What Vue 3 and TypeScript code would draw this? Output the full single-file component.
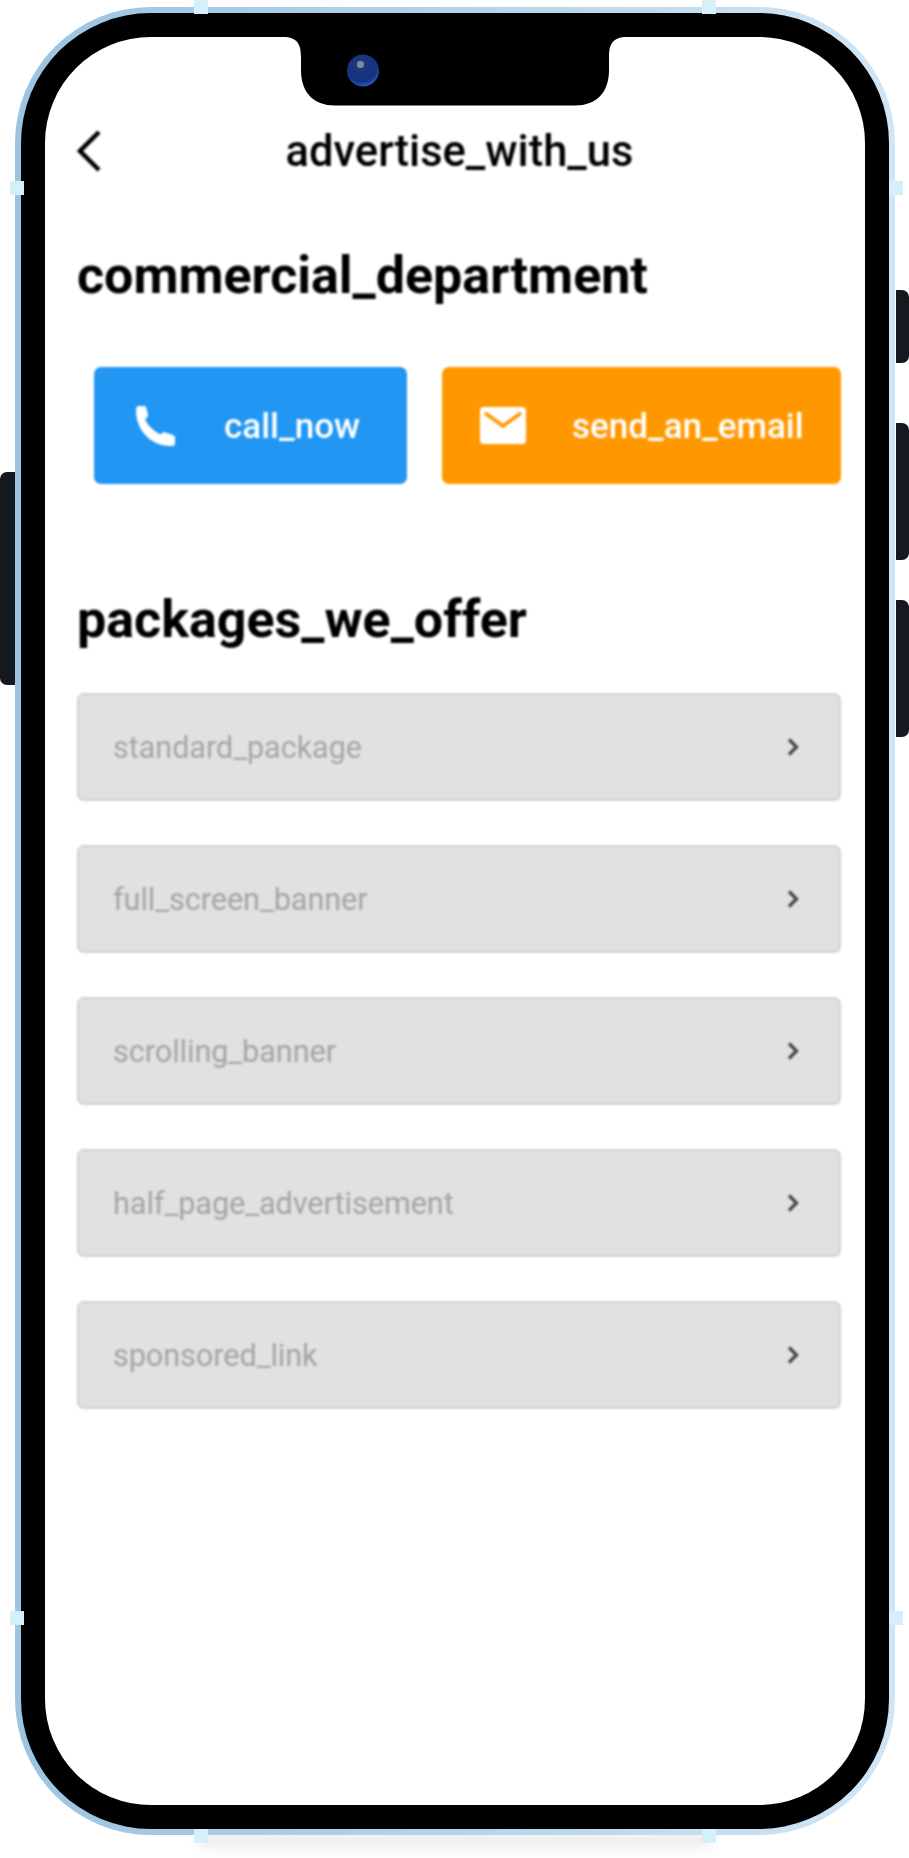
<script setup lang="ts">
const packages: string[] = [
  'standard_package',
  'full_screen_banner',
  'scrolling_banner',
  'half_page_advertisement',
  'sponsored_link',
]
const studs: string[] = ['tl', 'tr', 'lt', 'rt', 'lb', 'rb', 'bl', 'br']
const keys: string[] = ['vol', 'r1', 'r2', 'r3']
</script>

<template>
  <div class="page">
    <div class="shadow"></div>
    <span v-for="k in keys" :key="k" class="key" :class="k"></span>
    <div class="ring">
      <div class="bezel">
        <div class="screen">
          <svg class="notch" width="344" height="70" viewBox="0 0 344 70">
            <path d="M0 0H344C329 0 326 8 326 20V33C326 55 314 68.500 292 68.500H52C30 68.500 18 55 18 33V20C18 8 15 0 0 0Z" fill="#000" />
            <defs>
              <radialGradient id="lens" cx="0.45" cy="0.35" r="0.7">
                <stop offset="0" stop-color="#1b3a7c" />
                <stop offset="0.7" stop-color="#14327f" />
                <stop offset="1" stop-color="#2f66d8" />
              </radialGradient>
            </defs>
            <circle cx="80" cy="33.500" r="16" fill="url(#lens)" />
            <rect x="74" y="24" width="7" height="7" rx="3" fill="#7c8aa8" />
          </svg>

          <div class="content">
            <header class="topbar">
              <svg class="back" width="24" height="42" viewBox="0 0 24 42">
                <path d="M22 2L3 21L22 40" fill="none" stroke="#000" stroke-width="4.500" />
              </svg>
              <h1 class="title">advertise_with_us</h1>
            </header>

            <h2 class="heading first">commercial_department</h2>

            <div class="actions">
              <button class="action call">
                <svg class="phone" width="44" height="44" viewBox="0 0 44 44">
                  <path d="M6 2H11.500Q13 2 13.300 3.500L15 11Q15.300 12.500 14 13.500L12 15.500Q16 24 27 30.500L30 28.500Q31 28 32.500 28.500L40 31Q42 31.500 42 33.500V39Q42 42 39 42H36Q19 41 9 27Q3 18 3 6Q3 2 6 2Z" fill="#fff" />
                </svg>
                <span>call_now</span>
              </button>
              <button class="action mail">
                <svg class="envelope" width="46" height="37" viewBox="0 0 46 37">
                  <path d="M4 0H42a4 4 0 0 1 4 4V33a4 4 0 0 1-4 4H4a4 4 0 0 1-4-4V4a4 4 0 0 1 4-4Z" fill="#fff" />
                  <path d="M5 6L23 19L41 6" fill="none" stroke="#ff9800" stroke-width="3.500" />
                </svg>
                <span>send_an_email</span>
              </button>
            </div>

            <h2 class="heading second">packages_we_offer</h2>

            <ul class="rows">
              <li v-for="p in packages" :key="p" class="row">
                <span>{{ p }}</span>
                <svg width="14" height="20" viewBox="0 0 14 20">
                  <path d="M3 2.500L10.500 10L3 17.500" fill="none" stroke="#454545" stroke-width="3.200" />
                </svg>
              </li>
            </ul>
          </div>
        </div>
      </div>
    </div>
    <span v-for="s in studs" :key="s" class="stud" :class="s"></span>
  </div>
</template>

<style>
html,
body {
  margin: 0;
  background: #fff;
}
</style>

<style scoped>
.page {
  position: relative;
  width: 909px;
  height: 1858px;
  padding: 7px 0 0 15px;
  box-sizing: border-box;
  overflow: hidden;
  background: #fff;
  font-family: Roboto, "Liberation Sans", sans-serif;
}
.ring {
  position: relative;
  width: 880px;
  height: 1828px;
  padding: 6px;
  box-sizing: border-box;
  border-radius: 136px;
  background: linear-gradient(90deg, #9cc4e1 0%, #b4d3ea 50%, #d2e5f4 100%);
}
.bezel {
  width: 868px;
  height: 1816px;
  padding: 24px;
  box-sizing: border-box;
  border-radius: 130px;
  background: #000;
}
.screen {
  position: relative;
  width: 820px;
  height: 1768px;
  border-radius: 106px;
  background: #fff;
  overflow: hidden;
}
.notch {
  position: absolute;
  left: 238px;
  top: 0;
}
.content {
  padding: 0 24px 0 32px;
  filter: blur(0.8px);
}
.topbar {
  position: relative;
  height: 54px;
  padding-top: 88px;
  display: flex;
  align-items: center;
  justify-content: center;
}
.back {
  position: absolute;
  left: 0;
  top: 93px;
}
.title {
  margin: 0 0 0 1px;
  font-size: 43.5px;
  font-weight: 500;
  line-height: 54px;
  color: #000;
}
.heading {
  margin: 0;
  font-size: 52px;
  font-weight: 700;
  line-height: 54px;
  color: #000;
}
.first {
  margin-top: 70px;
}
.second {
  margin-top: 109px;
}
.actions {
  display: flex;
  gap: 35px;
  margin: 64px 0 0 17px;
}
.action {
  display: flex;
  align-items: center;
  height: 117px;
  padding: 0;
  border: 0;
  border-radius: 7px;
  font: 500 35px Roboto, "Liberation Sans", sans-serif;
  color: #fff;
}
.action span {
  padding-top: 2px;
}
.call {
  width: 313px;
  background: #2196f3;
  padding-left: 39px;
  gap: 47px;
  box-sizing: border-box;
}
.mail {
  width: 399px;
  background: #ff9800;
  padding-left: 38px;
  gap: 46px;
  box-sizing: border-box;
}
.rows {
  list-style: none;
  margin: 46px 0 0;
  padding: 0;
  display: flex;
  flex-direction: column;
  gap: 44px;
}
.row {
  height: 108px;
  box-sizing: border-box;
  display: flex;
  align-items: center;
  justify-content: space-between;
  padding: 0 39px 0 34px;
  background: #e1e1e1;
  border: 2px solid #d2d2d2;
  border-radius: 7px;
  font-size: 30.5px;
  color: #a6a6a6;
}
.stud {
  position: absolute;
  width: 14px;
  height: 14px;
  background: #d5f0fb;
}
.tl { left: 194px; top: 0; }
.tr { left: 702px; top: 0; }
.lt { left: 10px; top: 181px; }
.rt { left: 889px; top: 181px; }
.lb { left: 10px; top: 1611px; }
.rb { left: 889px; top: 1611px; }
.bl { left: 194px; top: 1829px; }
.br { left: 702px; top: 1829px; }
.key {
  position: absolute;
  background: #14181f;
}
.vol {
  left: 0;
  top: 472px;
  width: 15px;
  height: 213px;
  border-radius: 7px 0 0 7px;
}
.r1,
.r2,
.r3 {
  left: 896px;
  width: 13px;
  border-radius: 0 7px 7px 0;
}
.r1 { top: 290px; height: 73px; }
.r2 { top: 423px; height: 137px; }
.r3 { top: 600px; height: 137px; }
.shadow {
  position: absolute;
  left: 200px;
  top: 1832px;
  width: 510px;
  height: 16px;
  background: #ededed;
  filter: blur(6px);
}
</style>
